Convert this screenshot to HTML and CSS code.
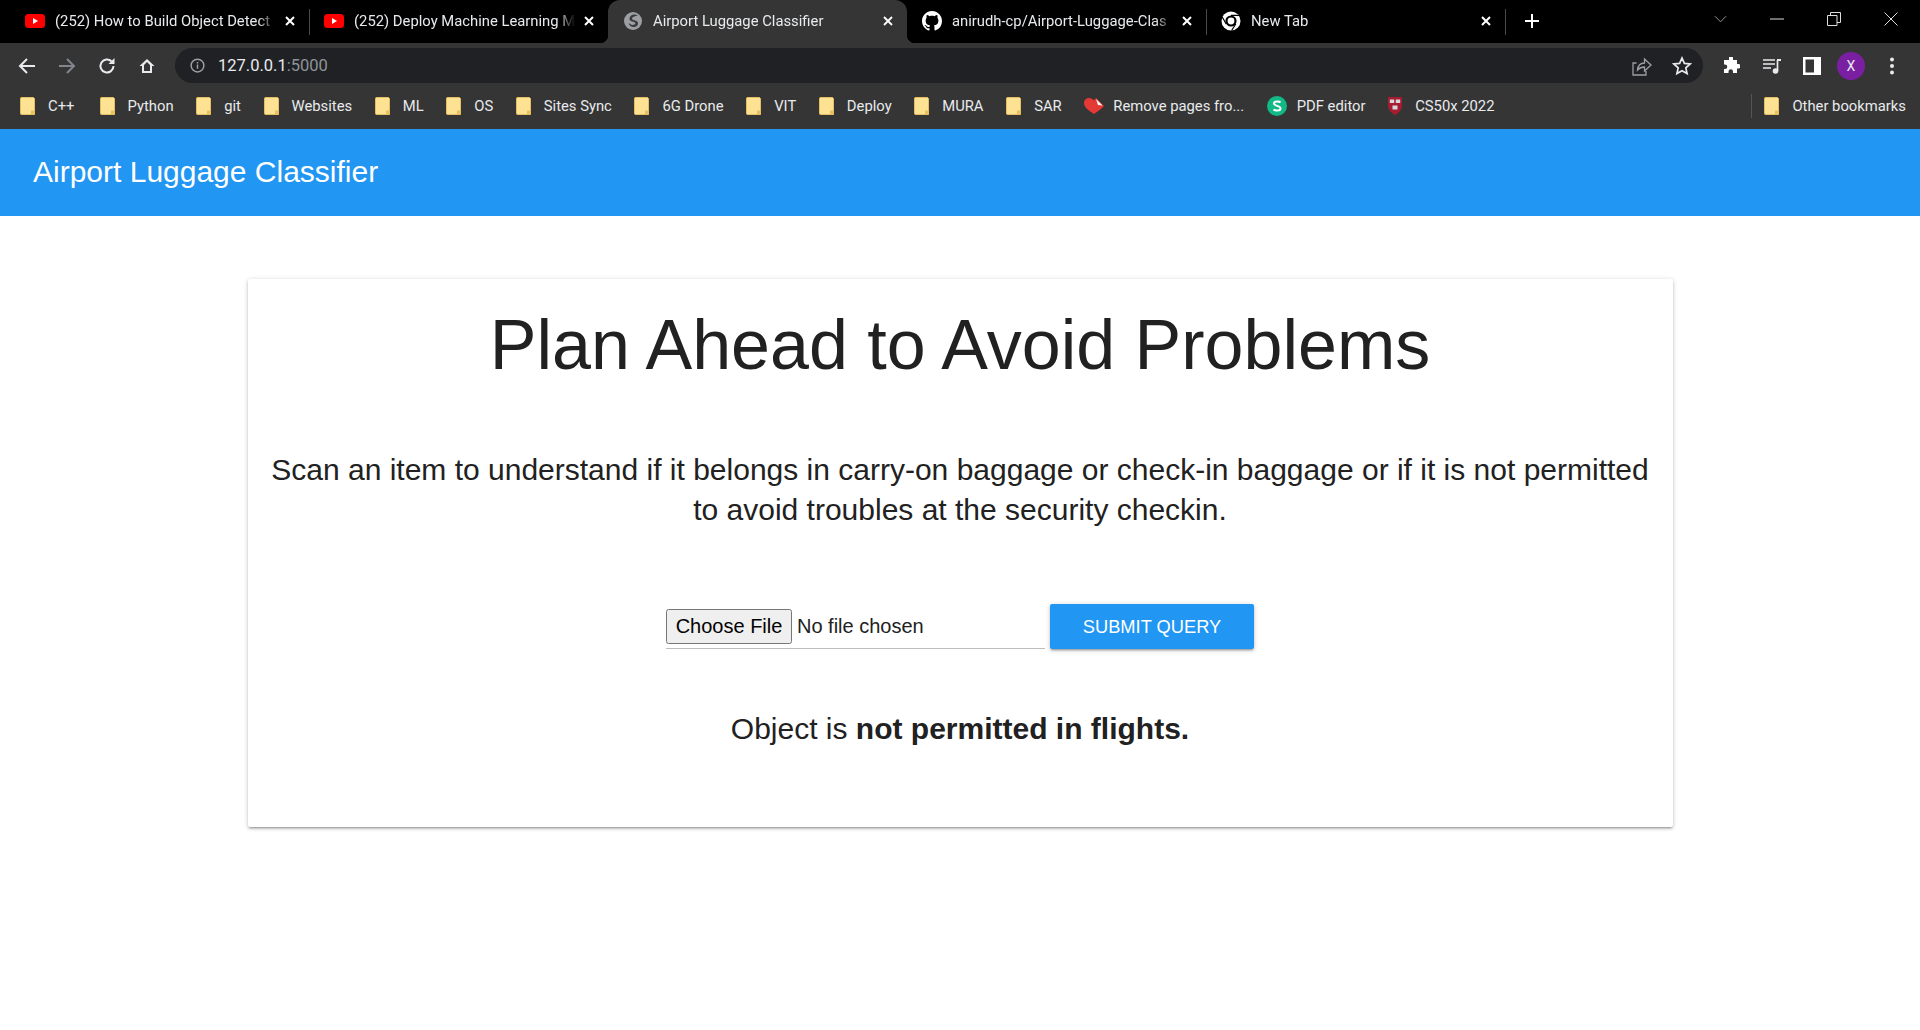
FILE: index.html
```html
<!DOCTYPE html>
<html lang="en">
<head>
  <meta charset="UTF-8">
  <meta name="viewport" content="width=device-width, initial-scale=1.0">
  <link rel="stylesheet" href="styles.css">
  <title>Airport Luggage Classifier</title>
</head>
<body>
  <svg class="defs" width="0" height="0">
    <symbol id="yt" viewBox="0 0 20 14">
      <rect width="20" height="14" rx="3.500" fill="#f00"/>
      <path d="M8 4l5 3-5 3z" fill="#fff"/>
    </symbol>
    <symbol id="folder" viewBox="0 0 15 18">
      <path d="M1.500.5h12l1 1V17.500h-13a1 1 0 0 1-1-1v-15a1 1 0 0 1 1-1z" fill="#fde293" stroke="#e5bd62"/>
      <path d="M11 17.500V13.500h3.500v4z" fill="#e8c05f"/>
    </symbol>
  </svg>

  <!-- browser chrome -->
  <div class="tabstrip">
    <div class="tab sep">
      <svg class="fav-yt"><use href="#yt"/></svg>
      <span class="tab-title">(252) How to Build Object Detect</span>
      <svg class="tab-x" viewBox="0 0 10 10"><path d="M1 1l8 8M9 1l-8 8" stroke="#fff" stroke-width="2"/></svg>
    </div>
    <div class="tab">
      <svg class="fav-yt"><use href="#yt"/></svg>
      <span class="tab-title">(252) Deploy Machine Learning M</span>
      <svg class="tab-x" viewBox="0 0 10 10"><path d="M1 1l8 8M9 1l-8 8" stroke="#fff" stroke-width="2"/></svg>
    </div>
    <div class="tab active">
      <svg class="fav" viewBox="0 0 20 20">
        <circle cx="10" cy="10" r="9" fill="#9c9fa3"/>
        <path d="M15 4.500C11 2.500 7 4 6.500 7.500 6.200 10 9 10.500 11 11c1.500.4 2 1.500.5 2.500-1.500.9-3.500.5-6-1.500 1 3.500 4.500 5 7.500 3.500 2.500-1.300 2.800-4 .5-5.500-1.500-1-4.500-1-4.500-2.500C9 6 11.500 5 15 4.500z" fill="#3a3b3d"/>
      </svg>
      <span class="tab-title">Airport Luggage Classifier</span>
      <svg class="tab-x" viewBox="0 0 10 10"><path d="M1 1l8 8M9 1l-8 8" stroke="#fff" stroke-width="1.800"/></svg>
    </div>
    <div class="tab sep">
      <svg class="fav" viewBox="0 0 16 16">
        <path fill="#fff" d="M8 0C3.580 0 0 3.580 0 8c0 3.540 2.290 6.530 5.470 7.590.4.070.55-.17.55-.38 0-.19-.01-.82-.01-1.490-2.010.37-2.530-.49-2.690-.94-.09-.23-.48-.94-.82-1.130-.28-.15-.68-.52-.01-.53.63-.01 1.080.58 1.230.82.720 1.210 1.870.87 2.330.66.070-.52.280-.87.510-1.070-1.780-.2-3.640-.89-3.640-3.950 0-.87.310-1.590.820-2.150-.08-.2-.36-1.020.08-2.120 0 0 .67-.21 2.200.82.640-.18 1.320-.27 2-.27s1.360.09 2 .27c1.530-1.040 2.200-.82 2.200-.82.44 1.100.16 1.920.08 2.120.51.560.82 1.270.82 2.150 0 3.070-1.870 3.750-3.650 3.950.29.250.54.730.54 1.480 0 1.070-.01 1.930-.01 2.200 0 .21.150.46.550.38A8.010 8.010 0 0016 8c0-4.420-3.580-8-8-8z"/>
      </svg>
      <span class="tab-title">anirudh-cp/Airport-Luggage-Clas</span>
      <svg class="tab-x" viewBox="0 0 10 10"><path d="M1 1l8 8M9 1l-8 8" stroke="#fff" stroke-width="2"/></svg>
    </div>
    <div class="tab sep">
      <svg class="fav" viewBox="0 0 20 20">
        <circle cx="10" cy="10" r="9.500" fill="#fff"/>
        <circle cx="10" cy="10" r="5.600" fill="#000"/>
        <circle cx="10" cy="10" r="3.400" fill="#fff"/>
        <path d="M10 4.400h8.400M5.200 13l-4-7M14.800 13l-4.200 6.500" stroke="#000" stroke-width="1.200"/>
      </svg>
      <span class="tab-title">New Tab</span>
      <svg class="tab-x" viewBox="0 0 10 10"><path d="M1 1l8 8M9 1l-8 8" stroke="#fff" stroke-width="2"/></svg>
    </div>
    <svg class="new-tab" viewBox="0 0 14 14"><path d="M7 0v14M0 7h14" stroke="#fff" stroke-width="2"/></svg>
    <div class="win-controls">
      <svg class="win-chevron" viewBox="0 0 14 8"><path d="M1 1l6 6 6-6" fill="none" stroke="#9aa0a6"/></svg>
      <svg class="win-btn" viewBox="0 0 14 14"><path d="M0 7h14" stroke="#ddd"/></svg>
      <svg class="win-btn" viewBox="0 0 14 14"><path d="M.5 3.500h9.500v10H.5zM3.500 3.500V.5h10v10H10" fill="none" stroke="#ddd"/></svg>
      <svg class="win-btn" viewBox="0 0 14 14"><path d="M.5.5l13 13M13.500.5l-13 13" stroke="#ddd"/></svg>
    </div>
  </div>

  <div class="toolbar">
    <svg class="tool" viewBox="0 0 18 18"><path d="M17 9H2M9 2L2 9l7 7" fill="none" stroke="#e8eaed" stroke-width="2"/></svg>
    <svg class="tool" viewBox="0 0 18 18"><path d="M1 9h15M9 2l7 7-7 7" fill="none" stroke="#80868b" stroke-width="2"/></svg>
    <svg class="tool" viewBox="0 0 18 18"><path d="M15.500 9A6.500 6.500 0 1 1 13.500 4.300" fill="none" stroke="#e8eaed" stroke-width="2"/><path d="M16.500 1v6h-6z" fill="#e8eaed"/></svg>
    <svg class="tool" viewBox="0 0 18 18"><path d="M9 2L1.500 9H4v7h10V9h2.500zM6 14V8l3-3 3 3v6z" fill="#e8eaed" fill-rule="evenodd"/></svg>
    <div class="omnibox">
      <svg class="info" viewBox="0 0 16 16"><circle cx="8" cy="8" r="6.800" fill="none" stroke="#9aa0a6" stroke-width="1.600"/><path d="M8 7v4.500M8 4.300v1.500" stroke="#9aa0a6" stroke-width="1.600"/></svg>
      <span class="url">127.0.0.1<span class="url-port">:5000</span></span>
      <svg class="share" viewBox="0 0 20 20"><path d="M4.500 7H1v12h13v-4M5.500 14c.5-4.500 3.500-7 7-7V3l6.500 6-6.500 6v-4c-3 0-5 .8-7 3z" fill="none" stroke="#9aa0a6" stroke-width="1.300"/></svg>
      <svg class="star" viewBox="0 0 20 20"><path d="M10 2l2.400 5.400 5.800.6-4.400 3.900 1.300 5.700L10 14.700l-5.100 2.900 1.300-5.700L1.800 8l5.800-.6z" fill="none" stroke="#e8eaed" stroke-width="1.700"/></svg>
    </div>
    <svg class="tool puzzle" viewBox="0 0 18 18"><path d="M7 1a2 2 0 0 1 4 0v2h4v4h1.500a2.200 2.200 0 0 1 0 4.500H15V16h-4v-1.500a2.200 2.200 0 0 0-4.500 0V16H2v-4h1a2.300 2.300 0 0 0 0-4.600H2V3h5z" fill="#fff"/></svg>
    <svg class="tool media" viewBox="0 0 20 18"><path d="M1 3h12M1 7h12M1 11h8" stroke="#e8eaed" stroke-width="1.700"/><path d="M15.500 3v11" stroke="#e8eaed" stroke-width="1.700"/><path d="M15 2h4v2h-4z" fill="#e8eaed"/><circle cx="13.500" cy="14" r="2.800" fill="#e8eaed"/></svg>
    <svg class="tool panel" viewBox="0 0 18 18"><path d="M0 0h18v18H0zM2.500 2.500v13H11v-13z" fill="#fff" fill-rule="evenodd"/></svg>
    <span class="avatar">X</span>
    <svg class="tool dots" viewBox="0 0 4 18"><circle cx="2" cy="2.500" r="2" fill="#e8eaed"/><circle cx="2" cy="9" r="2" fill="#e8eaed"/><circle cx="2" cy="15.500" r="2" fill="#e8eaed"/></svg>
  </div>

  <div class="bookmarks">
    <a class="bm"><svg class="bm-folder"><use href="#folder"/></svg>C++</a>
    <a class="bm"><svg class="bm-folder"><use href="#folder"/></svg>Python</a>
    <a class="bm"><svg class="bm-folder"><use href="#folder"/></svg>git</a>
    <a class="bm"><svg class="bm-folder"><use href="#folder"/></svg>Websites</a>
    <a class="bm"><svg class="bm-folder"><use href="#folder"/></svg>ML</a>
    <a class="bm"><svg class="bm-folder"><use href="#folder"/></svg>OS</a>
    <a class="bm"><svg class="bm-folder"><use href="#folder"/></svg>Sites Sync</a>
    <a class="bm"><svg class="bm-folder"><use href="#folder"/></svg>6G Drone</a>
    <a class="bm"><svg class="bm-folder"><use href="#folder"/></svg>VIT</a>
    <a class="bm"><svg class="bm-folder"><use href="#folder"/></svg>Deploy</a>
    <a class="bm"><svg class="bm-folder"><use href="#folder"/></svg>MURA</a>
    <a class="bm"><svg class="bm-folder"><use href="#folder"/></svg>SAR</a>
    <a class="bm"><svg class="bm-heart" viewBox="0 0 20 16"><path d="M10 16C5 12.500 0 9.500 0 5 0 2 2.300 0 5 0c2 0 3.800 1 5 2.500L12 0l8 8c-3 3-6 5.500-10 8z" fill="#e53935"/><path d="M12 1l6.500 6.500L14 7z" fill="#fff"/></svg>Remove pages fro...</a>
    <a class="bm"><svg class="bm-icon" viewBox="0 0 20 20"><circle cx="10" cy="10" r="10" fill="#12b886"/><path d="M13.500 6.500C12.500 5.300 7 4.800 7 7.500s6.500 2 6.500 5c0 2.700-5.500 2.500-7 1" fill="none" stroke="#fff" stroke-width="2"/></svg>PDF editor</a>
    <a class="bm"><svg class="bm-shield" viewBox="0 0 14 18"><path d="M0 0h14v9c0 4-3.500 7-7 9-3.500-2-7-5-7-9z" fill="#a51c30"/><path d="M1.800 2.500h4.400v3.500H1.800zM7.800 2.500h4.400v3.500H7.800zM4.500 8.500h5v4h-5z" fill="#d8d8d8"/></svg>CS50x 2022</a>
    <span class="bm-sep"></span>
    <a class="bm"><svg class="bm-folder"><use href="#folder"/></svg>Other bookmarks</a>
  </div>

  <!-- page -->
  <nav class="navbar">Airport Luggage Classifier</nav>

  <main class="card">
    <h1>Plan Ahead to Avoid Problems</h1>
    <p class="intro">Scan an item to understand if it belongs in carry-on baggage or check-in baggage or if it is not permitted to avoid troubles at the security checkin.</p>
    <form class="upload">
      <div class="file-field"><input type="file" class="file-input"></div>
      <button type="button" class="btn">Submit Query</button>
    </form>
    <p class="result">Object is <b>not permitted in flights.</b></p>
  </main>
</body>
</html>
```

FILE: styles.css
```css
html {
  height: 100%;
}

body {
  min-height: 100%;
  margin: 0;
  background-color: #fff;
  font-family: "Liberation Sans", Arial, sans-serif;
  color: #212121;
}

.defs {
  display: block;
  height: 0;
}

/* tab strip */
.tabstrip {
  display: flex;
  align-items: stretch;
  height: 43px;
  padding-left: 10px;
  background-color: #000;
  font-family: Roboto, sans-serif;
  font-size: 14.800px;
  color: #e8eaed;
}

.tab {
  position: relative;
  display: flex;
  align-items: center;
  box-sizing: border-box;
  width: 299px;
  padding: 0 14px 2px 15px;
}

.tab.sep::after {
  content: "";
  position: absolute;
  right: -1px;
  top: 9px;
  height: 26px;
  width: 1px;
  background-color: #4a4a4a;
}

.tab.active {
  background-color: #353535;
  border-radius: 12px 12px 0 0;
}

/* the little inverse corners where the active tab meets the toolbar */
.tab.active::before,
.tab.active::after {
  content: "";
  position: absolute;
  bottom: 0;
  width: 8px;
  height: 8px;
}

.tab.active::before {
  left: -8px;
  background: radial-gradient(circle at 0 0, transparent 8px, #353535 8.500px);
}

.tab.active::after {
  right: -8px;
  background: radial-gradient(circle at 100% 0, transparent 8px, #353535 8.500px);
}

.tab-title {
  flex: 1;
  margin-left: 10px;
  white-space: nowrap;
  overflow: hidden;
  -webkit-mask-image: linear-gradient(to right, #000 92%, transparent 100%);
  mask-image: linear-gradient(to right, #000 92%, transparent 100%);
}

.tab-x {
  flex: none;
  width: 10px;
  height: 10px;
  margin-left: 9px;
}

.fav,
.fav-yt {
  flex: none;
  width: 20px;
  height: 20px;
}

.new-tab {
  width: 14px;
  height: 14px;
  margin: 14px 0 0 20px;
}

.win-controls {
  display: flex;
  align-items: center;
  margin-left: auto;
  padding: 0 22px 5px 0;
  gap: 43px;
}

.win-chevron {
  width: 13px;
  height: 8px;
}

.win-btn {
  width: 14px;
  height: 14px;
}

/* toolbar */
.toolbar {
  display: flex;
  align-items: center;
  box-sizing: border-box;
  height: 45px;
  padding: 0 0 0 18px;
  background-color: #353535;
}

.tool {
  flex: none;
  width: 18px;
  height: 18px;
  margin-right: 22px;
}

.omnibox {
  display: flex;
  align-items: center;
  flex: none;
  box-sizing: border-box;
  width: 1528px;
  height: 35px;
  margin: 0 19px 0 -3px;
  padding: 0 11px 0 15px;
  border-radius: 18px;
  background-color: #202124;
}

.info {
  width: 15px;
  height: 15px;
  margin-right: 13px;
}

.url {
  font-family: Roboto, sans-serif;
  font-size: 16.500px;
  color: #e8eaed;
}

.url-port {
  color: #8f9499;
}

.share {
  width: 20px;
  height: 20px;
  margin-left: auto;
}

.star {
  width: 20px;
  height: 20px;
  margin-left: 20px;
}

.media {
  width: 20px;
  margin-right: 21px;
}

.panel {
  margin-right: 16px;
}

.avatar {
  flex: none;
  width: 28px;
  height: 28px;
  margin-right: 25px;
  border-radius: 50%;
  background-color: #7b1fa2;
  color: #e8eaed;
  font-family: Roboto, sans-serif;
  font-size: 14px;
  line-height: 28px;
  text-align: center;
}

.dots {
  width: 4px;
  margin-right: 0;
}

/* bookmarks bar */
.bookmarks {
  display: flex;
  align-items: center;
  box-sizing: border-box;
  height: 41px;
  padding: 0 14px 5px 20px;
  gap: 22.600px;
  background-color: #353535;
  font-family: Roboto, sans-serif;
  font-size: 14.800px;
  color: #e8eaed;
  white-space: nowrap;
}

.bm {
  display: flex;
  align-items: center;
}

.bm:first-child {
  margin-right: 2.500px;
}

.bm-folder {
  width: 15px;
  height: 18px;
  margin-right: 13px;
}

.bm-heart {
  width: 20px;
  height: 16px;
  margin-right: 9px;
}

.bm-icon {
  width: 20px;
  height: 20px;
  margin-right: 10px;
}

.bm-shield {
  width: 14px;
  height: 18px;
  margin-right: 13px;
}

.bm-sep {
  width: 1px;
  height: 24px;
  margin: 0 -10px 0 auto;
  background-color: #555;
}

/* page */
.navbar {
  height: 87px;
  padding-left: 33px;
  background-color: #2196f3;
  color: #fff;
  font-size: 30px;
  line-height: 86px;
}

.card {
  box-sizing: border-box;
  width: 1425px;
  height: 548px;
  margin: 63px auto 0;
  padding: 0 20px;
  background-color: #fff;
  border-radius: 2px;
  box-shadow: 0 2px 2px 0 rgba(0, 0, 0, 0.14), 0 3px 1px -2px rgba(0, 0, 0, 0.12), 0 1px 5px 0 rgba(0, 0, 0, 0.2);
  text-align: center;
}

.card h1 {
  margin: 0;
  padding-top: 26px;
  font-size: 70px;
  font-weight: 400;
  line-height: 80px;
}

.intro {
  margin: 65px 0 0;
  font-size: 30px;
  line-height: 40px;
}

.upload {
  display: flex;
  justify-content: center;
  margin-top: 74px;
  gap: 5px;
}

.file-field {
  box-sizing: border-box;
  width: 379px;
  height: 45px;
  border-bottom: 1px solid #bdbdbd;
  text-align: left;
}

.file-input {
  display: block;
  width: 100%;
  margin-top: 5px;
  font-family: "Liberation Sans", Arial, sans-serif;
  font-size: 20px;
  color: #212121;
}

.file-input::file-selector-button {
  height: 35px;
  width: 126px;
  margin-right: 5px;
  font: inherit;
}

.btn {
  box-sizing: border-box;
  width: 204px;
  height: 45px;
  border: none;
  border-radius: 2px;
  background-color: #2196f3;
  box-shadow: 0 2px 2px 0 rgba(0, 0, 0, 0.14), 0 3px 1px -2px rgba(0, 0, 0, 0.12), 0 1px 5px 0 rgba(0, 0, 0, 0.2);
  color: #fff;
  font-family: "Liberation Sans", Arial, sans-serif;
  font-size: 18.300px;
  text-transform: uppercase;
}

.result {
  margin: 60px 0 0;
  font-size: 30px;
  line-height: 40px;
}
```
